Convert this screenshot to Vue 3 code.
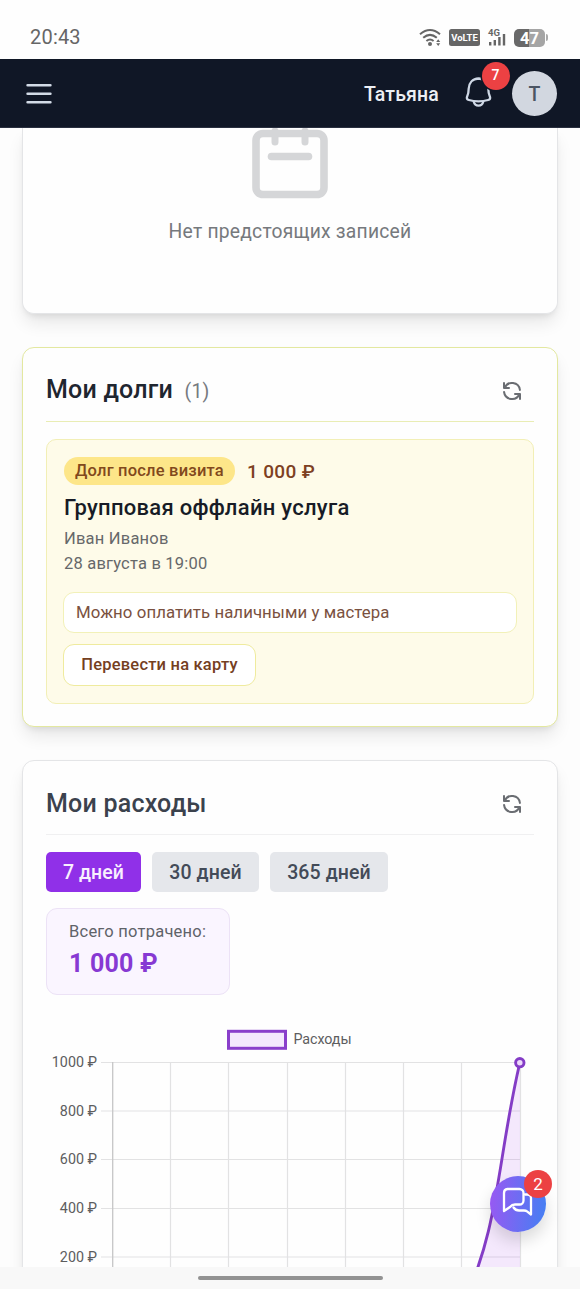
<script setup>
const periods = [
  { label: '7 дней', active: true, cls: 'p7' },
  { label: '30 дней', active: false, cls: 'p30' },
  { label: '365 дней', active: false, cls: 'p365' },
]
const xLines = [170.5, 228.5, 287.5, 345.5, 403.5, 461.5, 520.5]
const yTicks = [
  { y: 1062.5, label: '1000 ₽' },
  { y: 1111, label: '800 ₽' },
  { y: 1159.5, label: '600 ₽' },
  { y: 1208.5, label: '400 ₽' },
  { y: 1257, label: '200 ₽' },
]
const refreshPath =
  'M4 4v5h.582m15.356 2A8.001 8.001 0 004.582 9m0 0H9m11 11v-5h-.581m0 0a8.003 8.003 0 01-15.357-2m15.357 2H15'
</script>

<template>
  <div class="screen">
    <div class="status">
      <span class="clock">20:43</span>
      <div class="status-icons">
        <svg class="wifi" width="24" height="20" viewBox="0 0 24 20" fill="none" stroke="#666" stroke-width="2">
          <path d="M1 6.2Q11 -2.2 21 6.2M4.2 9.8Q11 4 17.8 9.8M7.4 13Q11 10 14.6 13" />
          <circle cx="11" cy="16" r="2" fill="#666" stroke="none" />
          <path d="M17.2 14l2-2.8 2 2.8zM17.2 15.2l2 2.8 2-2.8z" fill="#666" stroke="none" />
        </svg>
        <span class="volte">VoLTE</span>
        <div class="signal">
          <span class="gen">4G</span>
          <svg width="17" height="13" viewBox="0 0 17 13" fill="#666">
            <rect x="0" y="9" width="2.4" height="3.5" /><rect x="4.6" y="7" width="2.4" height="5.5" />
            <rect x="9.2" y="4" width="2.4" height="8.5" /><rect x="13.8" y="1" width="2.4" height="11.5" />
          </svg>
        </div>
        <div class="battery"><span>47</span></div>
        <i class="cap"></i>
      </div>
    </div>

    <header class="topbar">
      <svg class="menu" width="26" height="22" viewBox="0 0 26 22" stroke="#d3dbe7" stroke-width="2.6" stroke-linecap="round">
        <path d="M1.6 2.2h22.8M1.6 10.8h22.8M1.6 19.2h22.8" />
      </svg>
      <span class="user">Татьяна</span>
      <div class="bell">
        <svg width="34" height="34" viewBox="0 0 34 34" fill="none" stroke="#cfd8e5" stroke-width="2.3" stroke-linecap="round" stroke-linejoin="round">
          <path d="M17.500 4.500C11.500 4.700 8 9 7.700 14.500C7.700 19 7 20.800 6 23Q5.200 25.300 7.800 26Q17.500 28.600 27.200 26Q29.800 25.300 29 23C28 20.800 27.300 19 27.300 14.500C27 9 23.500 4.700 17.500 4.500Z" />
          <path d="M12.700 27.600Q13.700 31.700 17.500 31.700T22.300 27.600" />
        </svg>
        <span class="badge">7</span>
      </div>
      <div class="avatar">Т</div>
    </header>

    <main class="content">
      <section class="card empty">
        <svg width="76" height="71" viewBox="0 0 76 71" fill="none" stroke="#d5d6d8" stroke-width="7.6" stroke-linecap="round">
          <rect x="4" y="5.5" width="68" height="61" rx="7" />
          <path d="M19.5 28.5h37" />
          <path d="M23 3v11M53 3v11" stroke-width="7" />
        </svg>
        <p>Нет предстоящих записей</p>
      </section>

      <section class="card debts">
        <div class="head">
          <h2 class="dark">Мои долги <small>(1)</small></h2>
          <svg class="refresh" width="24" height="24" viewBox="0 0 24 24"><path :d="refreshPath" /></svg>
        </div>
        <article class="debt">
          <div class="row">
            <span class="tag">Долг после визита</span>
            <b class="sum">1 000 ₽</b>
          </div>
          <h3>Групповая оффлайн услуга</h3>
          <p class="who">Иван Иванов</p>
          <p class="when">28 августа в 19:00</p>
          <div class="note">Можно оплатить наличными у мастера</div>
          <button class="transfer">Перевести на карту</button>
        </article>
      </section>

      <section class="card costs">
        <div class="head">
          <h2>Мои расходы</h2>
          <svg class="refresh" width="24" height="24" viewBox="0 0 24 24"><path :d="refreshPath" /></svg>
        </div>
        <div class="periods">
          <button v-for="p in periods" :key="p.label" :class="[p.cls, { active: p.active }]">{{ p.label }}</button>
        </div>
        <div class="total">
          <span>Всего потрачено:</span>
          <strong>1 000 ₽</strong>
        </div>
        <svg class="chart" width="488" height="260" viewBox="46 1018 488 260">
          <rect x="228.5" y="1031.3" width="57" height="17" fill="#f4e8fd" stroke="#8a3fcb" stroke-width="3" />
          <text x="293.5" y="1044" class="legend" textLength="58">Расходы</text>
          <g stroke="#e2e2e3" stroke-width="1.2">
            <path v-for="x in xLines" :key="x" :d="`M${x} 1062V1278`" />
            <path v-for="t in yTicks" :key="t.y" :d="`M101 ${t.y}H520`" />
          </g>
          <path d="M112.7 1062V1278" stroke="#c6c6c7" stroke-width="1.3" />
          <text v-for="t in yTicks" :key="t.label" x="97" :y="t.y + 4.5" class="tick">{{ t.label }}</text>
          <path d="M462 1306C500 1227 497 1160 520 1062V1306Z" fill="#a03bf0" fill-opacity=".11" />
          <path d="M462 1306C500 1227 497 1160 520 1062" fill="none" stroke="#843cc6" stroke-width="2.9" />
          <circle cx="519.8" cy="1062.7" r="4.2" fill="#ecd9fa" stroke="#843cc6" stroke-width="2.9" />
        </svg>
      </section>
    </main>

    <div class="chat">
      <svg width="32" height="32" viewBox="0 0 32 32" fill="none" stroke="#fff" stroke-width="2.3" stroke-linejoin="round" stroke-linecap="round">
        <path d="M6.500 4h12a4 4 0 0 1 4 4v7.500a4 4 0 0 1-4 4H14q-3 0-5 2.500l-6 4V8a4 4 0 0 1 3.500-4z" />
        <path d="M24 9.500h2.500a3.500 3.500 0 0 1 3.500 3.500v16.500l-4-3.200q-1-.8-3-.8H18q-3.500 0-5.500-3" />
      </svg>
      <span class="badge">2</span>
    </div>

    <footer class="navbar"><i></i></footer>
  </div>
</template>

<style>
body { margin: 0; background: #fff; }
</style>

<style scoped>
* { box-sizing: border-box; }
.screen {
  position: relative; width: 580px; height: 1289px; overflow: hidden;
  display: flex; flex-direction: column;
  font-family: Roboto, "Liberation Sans", sans-serif; background: #fdfdfd;
}
h2, h3, p { margin: 0; }
button { font: inherit; border: 0; padding: 0; }

.status { height: 59px; flex: none; background: #fefefe; display: flex; justify-content: space-between; padding: 16px 32px 0 30px; }
.clock { font-size: 20px; line-height: 43px; color: #666; letter-spacing: .2px; }
.status-icons { display: flex; align-items: center; height: 43px; }
.wifi { margin-right: 6px; }
.volte { width: 31px; height: 17px; border-radius: 2.5px; background: #666; color: #fff; font-size: 9.500px; font-weight: 700; line-height: 17px; text-align: center; }
.signal { position: relative; width: 19px; height: 20px; margin: 0 7px 0 8px; }
.signal svg { position: absolute; left: 1px; bottom: 2px; }
.gen { position: absolute; left: 0; top: 0; font-size: 9.500px; line-height: 10px; font-weight: 700; color: #666; }
.battery { width: 31px; height: 18px; border-radius: 5px; background: linear-gradient(90deg, #696969 48%, #a5a5a5 48%); color: #fff; font-size: 16.500px; font-weight: 700; line-height: 19px; text-align: center; }
.cap { width: 2px; height: 7px; margin-left: 1px; background: #aaa; border-radius: 0 2px 2px 0; }

.topbar { height: 69px; flex: none; z-index: 2; background: #101726; display: flex; align-items: center; padding: 1px 23px 0 26px; border-bottom: 1px solid #2a3040; }
.menu { margin-right: auto; }
.user { font-size: 19.500px; font-weight: 500; color: #eceff4; letter-spacing: .15px; margin: 1px 22px 0 0; }
.bell { position: relative; width: 34px; height: 34px; margin: -6px 17px 0 0; }
.badge { position: absolute; width: 28px; height: 28px; border-radius: 50%; background: #ec4143; color: #fff; display: flex; align-items: center; justify-content: center; }
.bell .badge { left: 20.500px; top: -11.500px; font-size: 14px; font-weight: 500; padding-bottom: 2px; box-shadow: 0 0 0 1.500px #101726; }
.avatar { width: 45px; height: 45px; border-radius: 50%; background: #d2d7e0; color: #4b5563; display: flex; align-items: center; justify-content: center; font-size: 19.500px; font-weight: 500; padding-top: 1px; }

.content { height: 1139px; flex: none; overflow: hidden; padding: 0 22px; display: flex; flex-direction: column; gap: 33px; }
.card { flex: none; background: #fefefe; border: 1.500px solid #e4e5e7; border-radius: 12px; padding: 0 23px; box-shadow: 0 11px 17px -2px rgba(0,0,0,.09), 0 4px 7px -3px rgba(0,0,0,.10); width: 536px; }
.empty { height: 186px; border-top: 0; border-radius: 0 0 12px 12px; display: flex; flex-direction: column; align-items: center; }
.empty svg { flex: none; }
.empty p { margin-top: 20px; font-size: 19.300px; line-height: 26px; color: #76797d; letter-spacing: .22px; }

.head { display: flex; align-items: center; justify-content: space-between; border-bottom: 1.500px solid #f0f0f1; padding-right: 10.500px; height: 74px; padding-top: 12px; }
h2 { font-size: 25px; font-weight: 500; color: #3b424d; line-height: 34px; letter-spacing: .22px; padding-top: 1px; }
h2.dark { color: #1f2630; }
h2 small { font-size: 19.500px; font-weight: 400; color: #767a80; margin-left: 5px; }
.refresh path { fill: none; stroke: #6a6d72; stroke-width: 2; stroke-linecap: round; stroke-linejoin: round; }
.debts { height: 380px; border-color: #e3e8a0; }
.debts .head { border-bottom-color: #e9edb4; }
.debt { height: 265px; margin-top: 17px; border: 1.300px solid #f2efb6; border-radius: 10px; background: #fefbe9; padding: 17px; }
.row { display: flex; align-items: center; height: 28px; }
.tag { width: 171px; height: 28px; border-radius: 14px; background: #fde689; color: #81481c; font-size: 16.500px; font-weight: 500; line-height: 28px; text-align: center; letter-spacing: .2px; white-space: nowrap; }
.sum { margin-left: 12px; font-size: 19px; font-weight: 500; color: #7d4022; letter-spacing: .35px; }
h3 { font-size: 22px; font-weight: 500; color: #171b26; line-height: 28px; margin-top: 9px; letter-spacing: .28px; }
.who, .when { font-size: 16.500px; line-height: 25px; color: #66686a; letter-spacing: .2px; }
.who { margin-top: 4px; }
.note { height: 41px; width: 454px; margin: 16px 0 11px -1px; border: 1.300px solid #f2f1b8; border-radius: 11px; background: #fff; color: #7a5140; font-size: 16.800px; line-height: 39px; padding-left: 12px; letter-spacing: .07px; }
.transfer { width: 193px; height: 42px; margin-left: -1px; border: 1.500px solid #efeb9e; border-radius: 11px; background: #fff; color: #75401f; font-size: 16.500px; font-weight: 500; letter-spacing: .2px; display: block; padding-bottom: 2px; }

.costs { height: 560px; }
.periods { display: flex; gap: 11px; margin-top: 17px; }
.periods button { height: 40px; border-radius: 5px; background: #e5e7eb; color: #434b58; font-size: 19.500px; font-weight: 500; letter-spacing: .1px; padding-top: 1px; }
.periods .active { background: #9030e8; color: #f8effe; }
.periods .p7 { width: 95px; }
.periods .p30 { width: 107px; }
.periods .p365 { width: 118px; }
.total { width: 184px; height: 87px; margin: 16px 0 0 0; border: 1.300px solid #ece2f6; border-radius: 11px; background: #faf5ff; padding: 10px 0 0 22px; display: flex; flex-direction: column; }
.total span { font-size: 16.500px; line-height: 25px; color: #5f6369; letter-spacing: .23px; }
.total strong { font-size: 25px; line-height: 40px; font-weight: 700; color: #8739d3; letter-spacing: .2px; }
.chart { display: block; margin-top: 23px; font-family: Roboto, sans-serif; }
.legend, .tick { font-size: 14.300px; fill: #5d5d5e; }
.tick { text-anchor: end; }

.chat { position: absolute; z-index: 3; left: 490px; top: 1176px; width: 56px; height: 56px; border-radius: 50%; background: linear-gradient(95deg, #9a58f2, #4380f3); box-shadow: 0 9px 16px rgba(0,0,0,.14); }
.chat svg { position: absolute; left: 11px; top: 9px; }
.chat .badge { left: 34px; top: -6px; font-size: 17px; }
.navbar { height: 22px; flex: none; background: #f8f8f8; display: flex; justify-content: center; padding: 9px 0 0 0; }
.navbar i { width: 185px; height: 4px; border-radius: 2px; background: #929292; }
</style>
